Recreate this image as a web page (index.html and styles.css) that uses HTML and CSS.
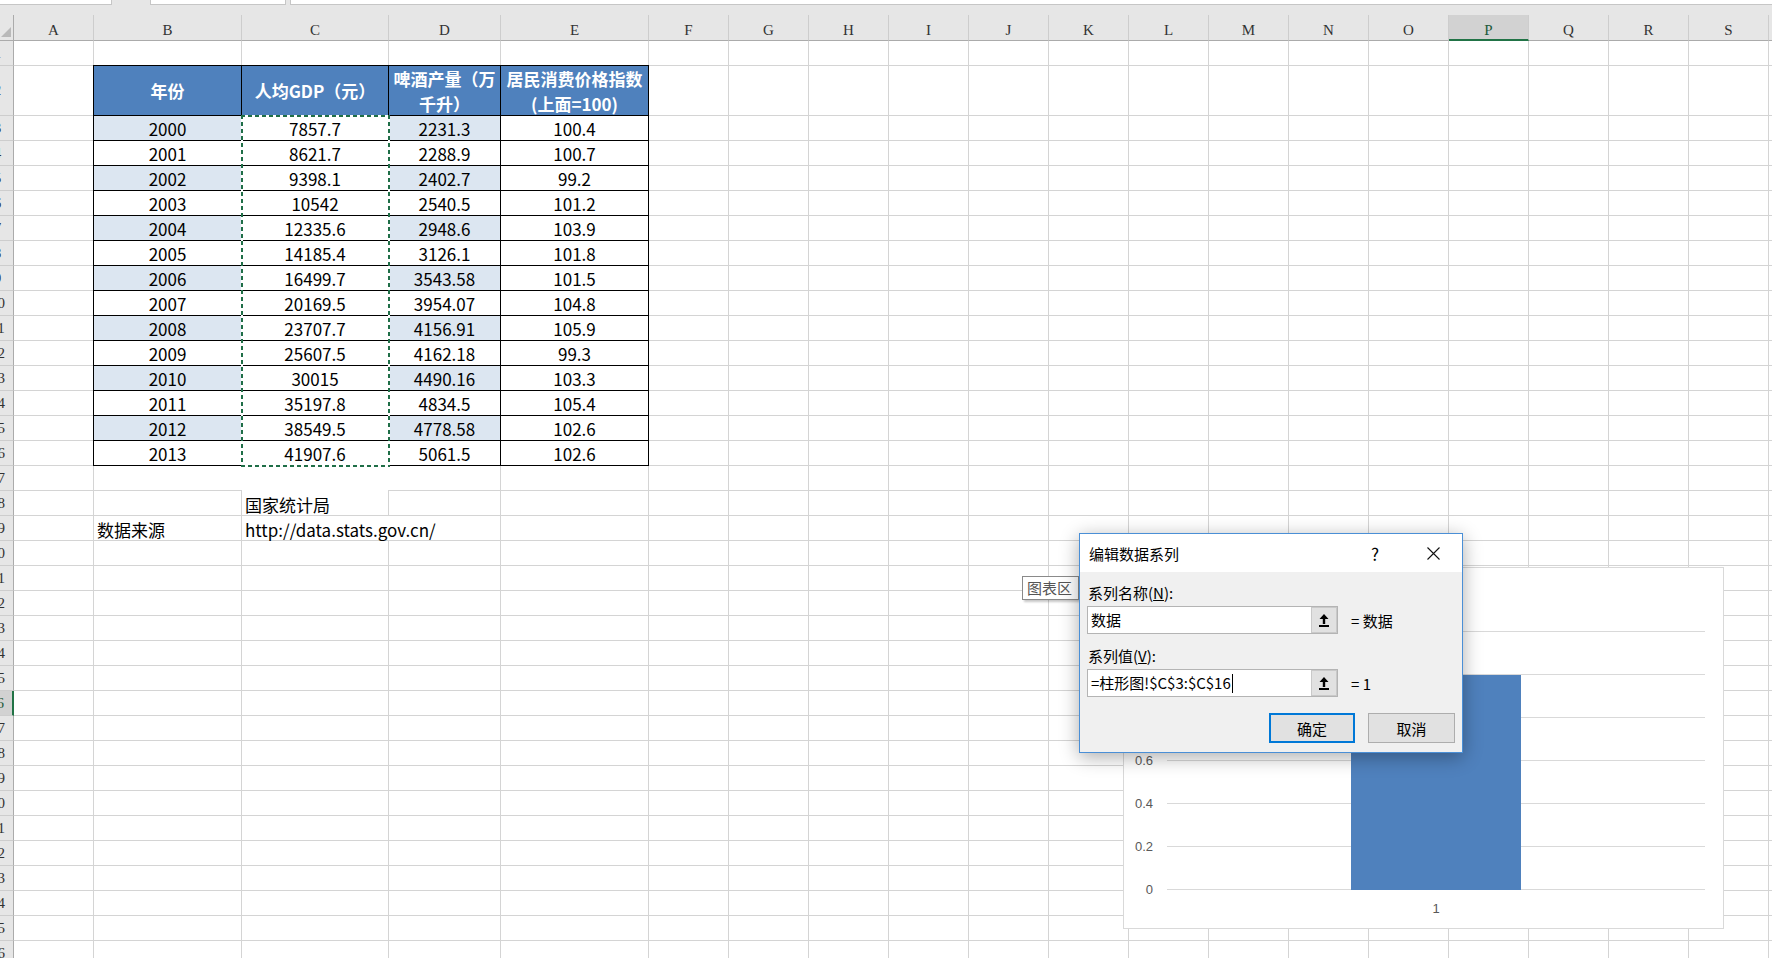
FILE: index.html
```html
<!DOCTYPE html>
<html lang="zh-CN">
<head>
<meta charset="utf-8">
<title>柱形图</title>
<link rel="stylesheet" href="styles.css">
</head>
<body>
<div class="app">
  <div class="fbar">
    <div class="fb name"></div><div class="fb gap"></div><div class="fb mid"></div><div class="fb sep"></div><div class="fb formula"></div>
  </div>
  <div class="sheet">
    <div class="corner"><span class="tri"></span></div>
    <div class="ch">A</div><div class="ch">B</div><div class="ch">C</div><div class="ch">D</div><div class="ch">E</div>
    <div class="ch">F</div><div class="ch">G</div><div class="ch">H</div><div class="ch">I</div><div class="ch">J</div>
    <div class="ch">K</div><div class="ch">L</div><div class="ch">M</div><div class="ch">N</div><div class="ch">O</div>
    <div class="ch sel">P</div><div class="ch">Q</div><div class="ch">R</div><div class="ch">S</div><div class="ch last"></div>

    <div class="rh"><span>1</span></div><div class="rh"><span>2</span></div><div class="rh"><span>3</span></div>
    <div class="rh"><span>4</span></div><div class="rh"><span>5</span></div><div class="rh"><span>6</span></div>
    <div class="rh"><span>7</span></div><div class="rh"><span>8</span></div><div class="rh"><span>9</span></div>
    <div class="rh"><span>10</span></div><div class="rh"><span>11</span></div><div class="rh"><span>12</span></div>
    <div class="rh"><span>13</span></div><div class="rh"><span>14</span></div><div class="rh"><span>15</span></div>
    <div class="rh"><span>16</span></div><div class="rh"><span>17</span></div><div class="rh"><span>18</span></div>
    <div class="rh"><span>19</span></div><div class="rh"><span>20</span></div><div class="rh"><span>21</span></div>
    <div class="rh"><span>22</span></div><div class="rh"><span>23</span></div><div class="rh"><span>24</span></div>
    <div class="rh"><span>25</span></div><div class="rh sel"><span>26</span></div><div class="rh"><span>27</span></div>
    <div class="rh"><span>28</span></div><div class="rh"><span>29</span></div><div class="rh"><span>30</span></div>
    <div class="rh"><span>31</span></div><div class="rh"><span>32</span></div><div class="rh"><span>33</span></div>
    <div class="rh"><span>34</span></div><div class="rh"><span>35</span></div><div class="rh"><span>36</span></div>
    <div class="rh"><span>37</span></div>

    <div class="vlines">
      <div></div><div></div><div></div><div></div><div></div><div></div><div></div><div></div><div></div><div></div>
      <div></div><div></div><div></div><div></div><div></div><div></div><div></div><div></div><div></div>
    </div>
    <div class="hlines"><div class="hl1"></div><div class="hl2"></div><div class="hl3"></div></div>

    <div class="fill17"></div>
    <div class="fillc"></div>

    <div class="dtable">
      <div class="hd"><span>年份</span></div>
      <div class="hd"><span>人均GDP（元）</span></div>
      <div class="hd"><span>啤酒产量（万<br>千升）</span></div>
      <div class="hd"><span>居民消费价格指数<br>(上面=100)</span></div>

      <div class="band">2000</div><div>7857.7</div><div class="band">2231.3</div><div>100.4</div>
      <div>2001</div><div>8621.7</div><div>2288.9</div><div>100.7</div>
      <div class="band">2002</div><div>9398.1</div><div class="band">2402.7</div><div>99.2</div>
      <div>2003</div><div>10542</div><div>2540.5</div><div>101.2</div>
      <div class="band">2004</div><div>12335.6</div><div class="band">2948.6</div><div>103.9</div>
      <div>2005</div><div>14185.4</div><div>3126.1</div><div>101.8</div>
      <div class="band">2006</div><div>16499.7</div><div class="band">3543.58</div><div>101.5</div>
      <div>2007</div><div>20169.5</div><div>3954.07</div><div>104.8</div>
      <div class="band">2008</div><div>23707.7</div><div class="band">4156.91</div><div>105.9</div>
      <div>2009</div><div>25607.5</div><div>4162.18</div><div>99.3</div>
      <div class="band">2010</div><div>30015</div><div class="band">4490.16</div><div>103.3</div>
      <div>2011</div><div>35197.8</div><div>4834.5</div><div>105.4</div>
      <div class="band">2012</div><div>38549.5</div><div class="band">4778.58</div><div>102.6</div>
      <div>2013</div><div>41907.6</div><div>5061.5</div><div>102.6</div>
    </div>
    <div class="marquee"></div>

    <div class="txt t-bureau">国家统计局</div>
    <div class="txt t-src">数据来源</div>
    <div class="txt t-url">http://data.stats.gov.cn/</div>
  </div>

  <div class="chart">
    <div class="yaxis"><span>1.2</span><span>1</span><span>0.8</span><span>0.6</span><span>0.4</span><span>0.2</span><span>0</span></div>
    <div class="plot"><div class="bar"></div></div>
    <div class="xlab">1</div>
  </div>

  <div class="tip">图表区</div>

  <div class="dialog">
    <div class="dlg-title">
      <div class="ttl">编辑数据系列</div>
      <div class="help">?</div>
      <div class="close">
        <svg width="13" height="13" viewBox="0 0 13 13"><path d="M0.5 0.5 L12.5 12.5 M12.5 0.5 L0.5 12.5" stroke="#111" stroke-width="1.1" fill="none"/></svg>
      </div>
    </div>
    <div class="dlg-body">
      <div class="lbl">系列名称(<u>N</u>):</div>
      <div class="field-row">
        <div class="input">
          <div class="val">数据</div>
          <div class="pick"><svg width="10" height="13" viewBox="0 0 10 13"><path d="M5 0 L9.5 5 H6.2 V10 H3.8 V5 H0.5 Z" fill="#000"/><rect x="0" y="11" width="10" height="2" fill="#000"/></svg></div>
        </div>
        <div class="eq">= 数据</div>
      </div>
      <div class="lbl lbl2">系列值(<u>V</u>):</div>
      <div class="field-row">
        <div class="input">
          <div class="val">=柱形图!$C$3:$C$16<span class="caret"></span></div>
          <div class="pick"><svg width="10" height="13" viewBox="0 0 10 13"><path d="M5 0 L9.5 5 H6.2 V10 H3.8 V5 H0.5 Z" fill="#000"/><rect x="0" y="11" width="10" height="2" fill="#000"/></svg></div>
        </div>
        <div class="eq">= 1</div>
      </div>
      <div class="buttons">
        <div class="btn def">确定</div>
        <div class="btn cancel">取消</div>
      </div>
    </div>
  </div>
</div>
</body>
</html>
```

FILE: styles.css
```css
* { box-sizing: border-box; }
html, body { margin: 0; padding: 0; }
body {
  width: 1772px;
  height: 958px;
  overflow: hidden;
  background: #fff;
  font-family: "Noto Sans CJK SC", "Noto Sans", sans-serif;
}
.app { position: relative; width: 1772px; height: 958px; overflow: hidden; }

/* formula bar remnant */
.fbar { height: 15px; background: #e6e6e6; display: flex; align-items: flex-start; }
.fb { height: 5px; background: #fff; border-bottom: 1px solid #c6c6c6; flex: none; }
.fb.name { width: 112px; border-right: 1px solid #c6c6c6; }
.fb.gap { width: 38px; background: transparent; border: none; }
.fb.mid { width: 136px; border-left: 1px solid #c6c6c6; border-right: 1px solid #c6c6c6; }
.fb.sep { width: 4px; background: transparent; border: none; }
.fb.formula { flex: 1; border-left: 1px solid #c6c6c6; }

/* sheet */
.sheet {
  display: grid;
  grid-template-columns: 14px 80px 148px 147px 112px 148px repeat(14, 80px) 1fr;
  grid-template-rows: 26px 25px 50px repeat(35, 25px);
}
.corner {
  grid-row: 1; grid-column: 1;
  background: #e6e6e6;
  border-right: 1px solid #ababab;
  border-bottom: 1px solid #ababab;
  position: relative;
}
.tri {
  position: absolute; right: 2px; bottom: 3px;
  width: 0; height: 0;
  border-left: 10px solid transparent;
  border-bottom: 10px solid #b9b9b9;
}
.ch {
  grid-row: 1;
  background: #e6e6e6;
  border-right: 1px solid #cdcdcd;
  border-bottom: 1px solid #ababab;
  display: flex; justify-content: center; align-items: center;
  padding-top: 5px;
  font: 15px "Liberation Serif", serif;
  color: #333;
}
.ch.last { border-right: none; }
.ch.sel { background: #d2d2d2; border-bottom: 2px solid #217346; color: #1f5a3a; padding-top: 6px; }

.rh {
  grid-column: 1;
  background: #e6e6e6;
  border-right: 1px solid #ababab;
  border-bottom: 1px solid #cdcdcd;
  display: flex; justify-content: flex-end; align-items: center;
  overflow: hidden;
  font: 15px "Liberation Serif", serif;
  color: #333;
}
.rh span { flex: none; width: 31px; text-align: center; }
.rh.sel { background: #d2d2d2; border-right: 2px solid #217346; color: #1f5a3a; }

.vlines {
  grid-column: 2 / -1; grid-row: 2 / -1;
  display: grid;
  grid-template-columns: 80px 148px 147px 112px 148px repeat(14, 80px);
}
.vlines div { border-right: 1px solid #d4d4d4; }
.hlines { grid-column: 2 / -1; grid-row: 2 / -1; display: flex; flex-direction: column; }
.hl1 { flex: none; height: 25px; border-bottom: 1px solid #d4d4d4; }
.hl2 { flex: none; height: 50px; border-bottom: 1px solid #d4d4d4; }
.hl3 { flex: 1; background: repeating-linear-gradient(to bottom, transparent 0 24px, #d4d4d4 24px 25px); }

.fill17 { grid-column: 3 / 6; grid-row: 18; background: #fff; margin: 0 1px 1px 0; }
.fillc { grid-column: 4; grid-row: 18 / 20; background: #fff; margin: 0 1px 1px 0; }

/* data table */
.dtable {
  grid-column: 3 / 7; grid-row: 3 / 18;
  margin: -1px 0 0 -1px;
  display: grid;
  grid-template-columns: 148px 147px 112px 148px;
  grid-template-rows: 50px repeat(14, 25px);
  border-top: 1px solid #000;
  border-left: 1px solid #000;
  font-size: 17px;
  color: #000;
}
.dtable > div {
  border-right: 1px solid #000;
  border-bottom: 1px solid #000;
  display: flex; align-items: center; justify-content: center;
  padding-top: 1px;
  background: #fff;
}
.dtable > div.band { background: #dce6f1; }
.dtable > div.hd {
  background: #4f81bd;
  color: #fff;
  font-weight: 700;
  text-align: center;
  line-height: 25px;
  padding-top: 0;
}
.marquee {
  grid-column: 4; grid-row: 4 / 18;
  margin: -1px;
  pointer-events: none;
  background:
    repeating-linear-gradient(to bottom, #1f6e47 0 4px, #fff 4px 7px) left top / 2px 100% no-repeat,
    repeating-linear-gradient(to bottom, #1f6e47 0 4px, #fff 4px 7px) right top / 2px 100% no-repeat,
    repeating-linear-gradient(to right, #1f6e47 0 4px, #fff 4px 7px) left top / 100% 2px no-repeat,
    repeating-linear-gradient(to right, #1f6e47 0 4px, #fff 4px 7px) left bottom / 100% 2px no-repeat;
}

.txt {
  font-size: 17px;
  color: #000;
  white-space: nowrap;
  padding-left: 3px;
  display: flex; align-items: center;
  padding-top: 2px;
}
.t-bureau { grid-column: 4; grid-row: 19; }
.t-src { grid-column: 3; grid-row: 20; }
.t-url { grid-column: 4 / 6; grid-row: 20; background: #fff; margin: 0 1px 1px 0; }

/* chart */
.chart {
  position: absolute;
  left: 1123px; top: 567px;
  width: 601px; height: 362px;
  background: #fff;
  border: 1px solid #d9d9d9;
  padding: 63px 18px 0 0;
  display: grid;
  grid-template-columns: 29px 538px;
  grid-template-rows: 259px auto;
  column-gap: 14px;
  font: 13px "Liberation Sans", sans-serif;
  color: #595959;
  z-index: 1;
}
.yaxis { grid-column: 1; grid-row: 1; margin-top: -21px; display: flex; flex-direction: column; }
.yaxis span { flex: none; height: 43px; line-height: 43px; text-align: right; }
.plot {
  grid-column: 2; grid-row: 1;
  background: repeating-linear-gradient(to bottom, #d9d9d9 0 1px, transparent 1px 43px);
  display: flex; justify-content: center; align-items: flex-end;
}
.bar { width: 170px; height: 215px; background: #4f81bd; }
.xlab { grid-column: 2; grid-row: 2; text-align: center; padding-top: 11px; line-height: 16px; }

/* tooltip */
.tip {
  position: absolute;
  left: 1022px; top: 576px;
  width: 57px; height: 24px;
  background: #fff;
  border: 1px solid #8a8a8a;
  box-shadow: 2px 2px 2px rgba(0, 0, 0, .22);
  font-size: 15px;
  line-height: 22px;
  color: #555;
  padding-left: 4px;
  white-space: nowrap;
  overflow: hidden;
  z-index: 2;
}

/* dialog */
.dialog {
  position: absolute;
  left: 1079px; top: 533px;
  width: 384px; height: 220px;
  background: #f0f0f0;
  border: 1px solid #4a8fd6;
  box-shadow: 0 4px 18px rgba(0, 0, 0, .33);
  font: 15px "Noto Sans CJK SC", sans-serif;
  color: #000;
  display: flex; flex-direction: column;
  z-index: 3;
}
.dlg-title { flex: none; height: 38px; background: #fff; display: flex; align-items: center; }
.dlg-title .ttl { flex: 1; padding-left: 9px; }
.dlg-title .help { width: 58px; text-align: center; font-size: 17px; }
.dlg-title .close { width: 58px; display: flex; justify-content: center; align-items: center; }
.dlg-body { padding: 11px 7px 0 7px; display: flex; flex-direction: column; }
.lbl { height: 20px; line-height: 20px; padding-left: 1px; }
.lbl2 { margin-top: 12px; }
.field-row { display: flex; align-items: center; gap: 13px; margin-top: 3px; }
.input { width: 251px; height: 28px; background: #fff; border: 1px solid #b4b4b4; display: flex; }
.input .val { flex: 1; padding-left: 3px; line-height: 26px; white-space: nowrap; display: flex; align-items: center; }
.caret { display: inline-block; width: 1px; height: 19px; background: #000; margin-left: 1px; }
.input .pick {
  width: 26px;
  background: #e1e1e1;
  border: 1px solid #c9c9c9;
  display: flex; align-items: center; justify-content: center;
}
.eq { white-space: nowrap; }
.buttons { display: flex; justify-content: flex-end; gap: 13px; margin-top: 16px; }
.btn {
  height: 30px;
  background: #e1e1e1;
  border: 1px solid #adadad;
  display: flex; align-items: center; justify-content: center;
}
.btn.def { width: 86px; border: 2px solid #0078d7; }
.btn.cancel { width: 87px; }
```
